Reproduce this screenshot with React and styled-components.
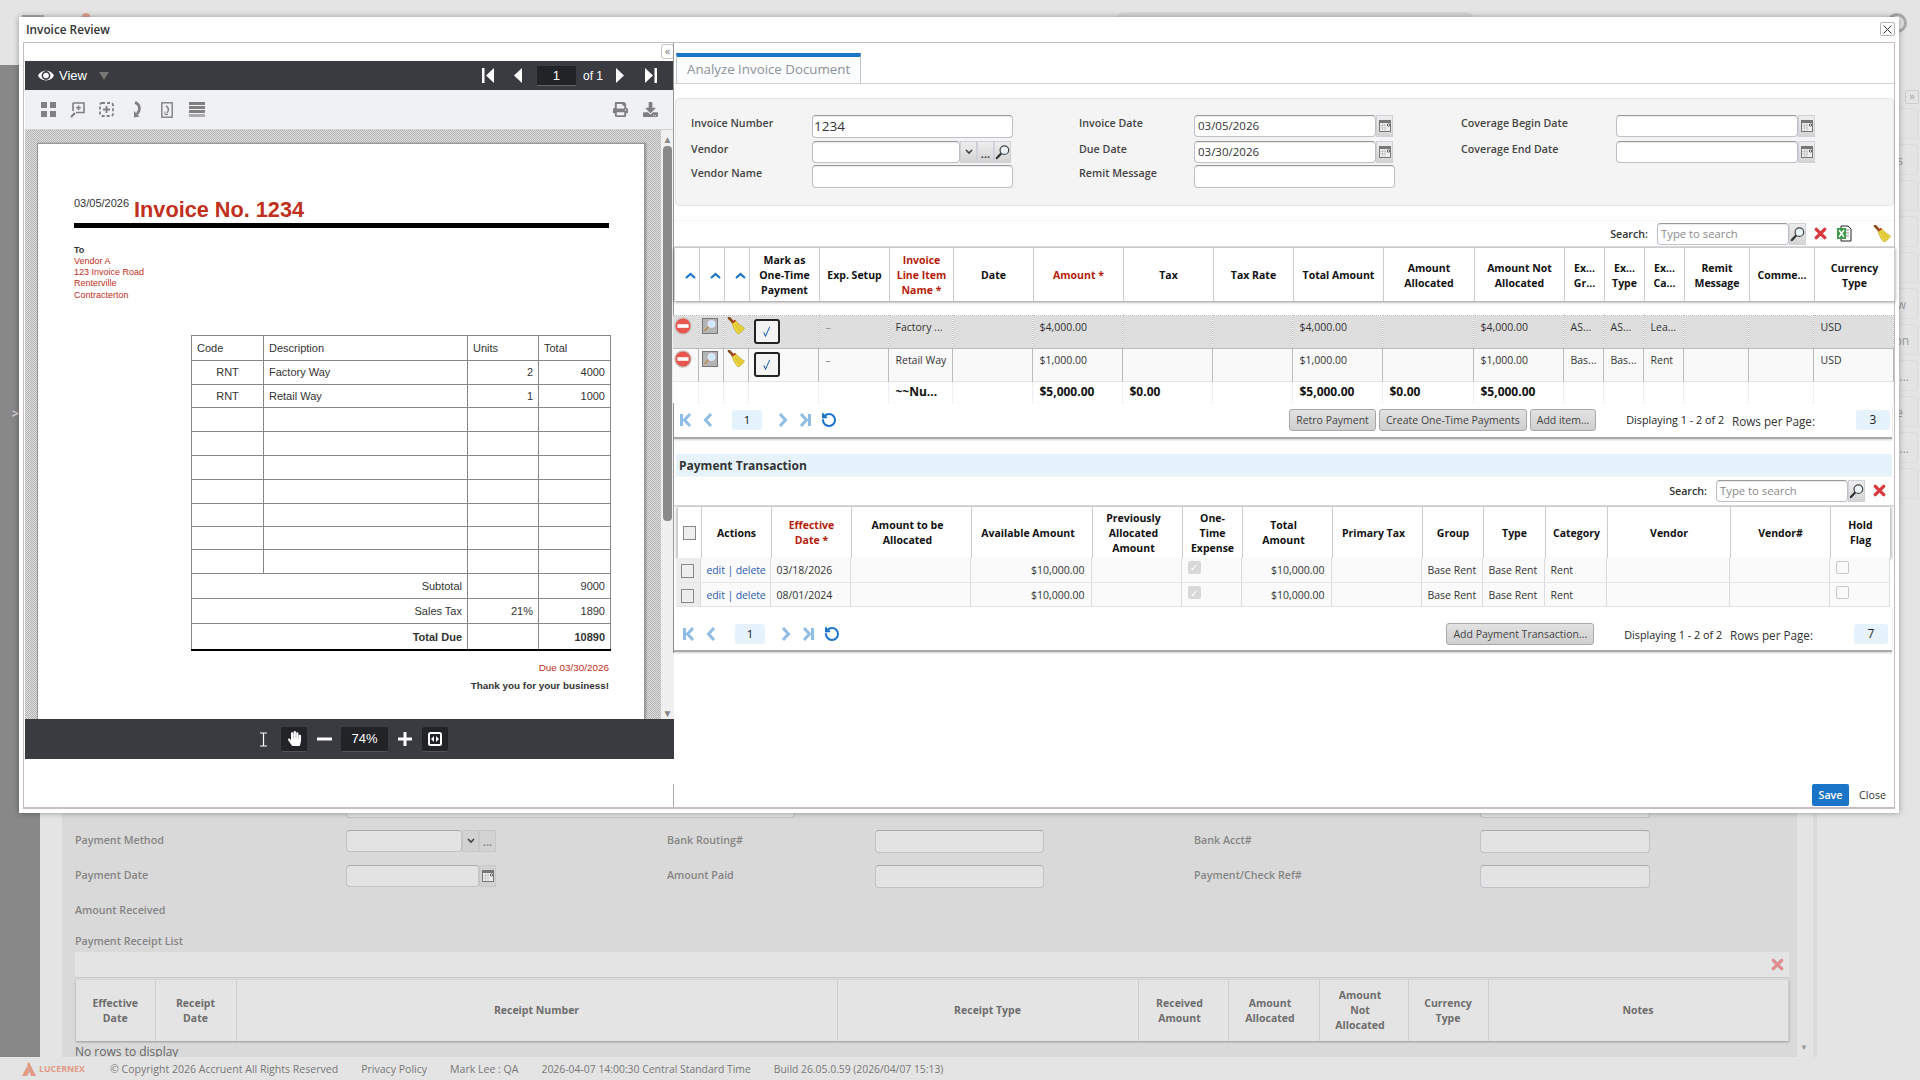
import React from "react";
import styled, { createGlobalStyle } from "styled-components";
import { RotateCcw } from "lucide-react";
import { FaHandPaper, FaPrint, FaDownload } from "react-icons/fa";

const Global = createGlobalStyle`
  html, body { margin: 0; padding: 0; width: 1920px; height: 1080px; overflow: hidden; background: #e4e4e4; }
  body { font-family: "Open Sans", "Liberation Sans", sans-serif; font-size: 10.5px; color: #333; }
  * { box-sizing: border-box; }
  table { border-collapse: collapse; table-layout: fixed; }
  svg { display: block; }
`;

/* ---------- page behind the dialog ---------- */
const Page = styled.div`
  position: relative;
  width: 1920px;
  height: 1080px;
  display: flex;
  flex-direction: column;
  overflow: hidden;
`;
const TopBar = styled.div`
  height: 65px;
  flex: none;
  background: #e4e4e4;
  display: flex;
  padding-top: 12px;
`;
const TopStub = styled.div`
  width: 22px; height: 8px; margin: 3px 0 0 22px; background: #aaa;
`;
const TopDot = styled.div`
  width: 8px; height: 8px; margin: 1px 0 0 38px; border-radius: 50%; background: #e0a090;
`;
const TopSearch = styled.div`
  width: 358px; height: 20px; margin-left: 1026px; border-radius: 8px; background: #d8d8d8;
`;
const TopRing = styled.div`
  width: 20px; height: 20px; margin: 1px 0 0 413px; border-radius: 50%; border: 3px solid #aaa;
`;
const Middle = styled.div`
  flex: 1;
  display: flex;
  min-height: 0;
`;
const LeftRail = styled.div`
  width: 40px;
  flex: none;
  background: #888;
  color: #d4d4d4;
  font-size: 12px;
  font-weight: 700;
  padding: 340px 0 0 12px;
`;
const LeftGutter = styled.div`
  width: 22px;
  flex: none;
  background: #e4e4e4;
`;
const Panel = styled.div`
  width: 1735px;
  flex: none;
  background: #d9d9d9;
  padding: 730px 8px 0 13px;
  overflow: hidden;
`;
const BgRow = styled.div`
  display: grid;
  grid-template-columns: 271px 321px 208px 319px 286px 170px;
  height: 35px;
  align-items: start;
`;
const BgLabel = styled.div`
  color: #858585;
  font-weight: 600;
  font-size: 10.7px;
  line-height: 16px;
  padding-top: 2px;
`;
const BgInput = styled.div`
  height: ${p => p.$h || 23}px;
  width: ${p => (p.$w ? p.$w + "px" : "auto")};
  border: 1px solid #c2c2ca;
  border-top-color: #aaa;
  border-radius: 4px;
  background: #e3e3e3;
  flex: none;
`;
const BgField = styled.div`
  display: flex;
  align-items: flex-start;
`;
const BgBtn = styled.div`
  width: 17px;
  height: 22px;
  flex: none;
  background: #d2d2d2;
  border: 1px solid #c8c8c8;
  color: #888;
  font-size: 11px;
  font-weight: 700;
  display: flex;
  align-items: center;
  justify-content: center;
`;
const BgSectionLabel = styled(BgLabel)`
  height: ${p => p.$h}px;
`;
const BgGridBar = styled.div`
  height: 26px;
  width: 1714px;
  background: #e4e4e4;
  display: flex;
  justify-content: flex-end;
  align-items: center;
  padding-right: 5px;
  border-bottom: 1px solid #ccc;
`;
const BgTable = styled.table`
  width: 1712px;
  margin: 2px 0 0 1px;
  background: #e4e4e4;
  box-shadow: 0 1px 2px rgba(0,0,0,.3);
  th {
    height: 61px;
    font-size: 10.5px;
    line-height: 15px;
    color: #6d6d6d;
    font-weight: 700;
    border-right: 1px solid #cfcfcf;
    text-align: center;
  }
`;
const BgPadTh = styled.th`
  padding-right: 8px;
`;
const BgEmpty = styled.div`
  font-size: 12px;
  line-height: 16px;
  color: #666;
  margin-top: 3px;
`;
const ScrollGutter = styled.div`
  width: 20px;
  flex: none;
  background: #e4e4e4;
  border-right: 4px solid #dcdcdc;
  display: flex;
  align-items: flex-end;
  padding: 0 0 5px 3px;
  color: #999;
  font-size: 8px;
`;
const RightRail = styled.div`
  flex: 1;
  background: #e4e4e4;
  padding: 25px 2px 0 8px;
`;
const RailToggle = styled.div`
  width: 14px;
  height: 14px;
  margin-left: auto;
  margin-right: -1px;
  border: 1px solid #ccc;
  border-radius: 2px;
  color: #a8a8a8;
  font-size: 11px;
  line-height: 10px;
  text-align: center;
`;
const RailCards = styled.div`
  margin: 4px 0 0 -20px;
  display: flex;
  flex-direction: column;
  gap: 5px;
`;
const RailCard = styled.div`
  height: 31px;
  border: 1px solid #dcdcdc;
  border-radius: 3px;
  color: #9a9a9a;
  font-size: 12px;
  line-height: 31px;
  text-align: right;
  padding-right: ${p => p.$tail}px;
  overflow: hidden;
`;
const FooterBar = styled.div`
  height: 23px;
  flex: none;
  background: #e4e4e4;
  color: #777;
  font-size: 10.55px;
  display: flex;
  align-items: center;
  padding-left: 22px;
`;
const FootLogo = styled.div`
  display: flex;
  align-items: center;
  gap: 3px;
  width: 88px;
  color: #e09a86;
  font-weight: 700;
  font-size: 8.8px;
`;
const FootItem = styled.span`
  margin-right: ${p => p.$gap}px;
  font-size: ${p => p.$fs || 10.55}px;
  white-space: nowrap;
`;

/* ---------- dialog ---------- */
const Dialog = styled.div`
  position: absolute;
  left: 19px;
  top: 17px;
  width: 1880px;
  height: 796px;
  background: #fff;
  box-shadow: 0 0 6px rgba(0,0,0,.35);
  padding: 0 4px 4px;
  display: flex;
  flex-direction: column;
`;
const DialogTitle = styled.div`
  height: 25px;
  flex: none;
  display: flex;
  align-items: center;
  justify-content: space-between;
  padding-left: 3px;
  padding-bottom: 1px;
  font-weight: 600;
  font-size: 11.8px;
  color: #333;
`;
const CloseX = styled.div`
  width: 15px;
  height: 14px;
  border: 1px solid #b5b5b5;
  border-radius: 2px;
  display: flex;
  align-items: center;
  justify-content: center;
`;
const Frame = styled.div`
  flex: 1;
  min-height: 0;
  display: flex;
  border: 1px solid #c6bcc2;
  border-bottom-width: 2px;
`;
const LeftPane = styled.div`
  width: 650px;
  flex: none;
  padding-left: 1px;
  display: flex;
  flex-direction: column;
`;
const CollapseStrip = styled.div`
  height: 18px;
  flex: none;
  display: flex;
  justify-content: flex-end;
  align-items: flex-start;
  padding-top: 1px;
`;
const CollapseBtn = styled.div`
  width: 13px;
  height: 15px;
  border: 1px solid #c4c4c4;
  border-radius: 3px;
  color: #777;
  font-size: 11px;
  line-height: 11px;
  text-align: center;
`;

/* ---------- pdf viewer ---------- */
const Viewer = styled.div`
  height: 698px;
  flex: none;
  display: flex;
  flex-direction: column;
`;
const DarkBar = styled.div`
  height: 29px;
  flex: none;
  background: #3a3b40;
  color: #fff;
  display: flex;
  align-items: center;
  padding: 0 17px 0 13px;
  font-family: "Liberation Sans", sans-serif;
`;
const ViewLabel = styled.span`
  font-size: 13px;
  margin: 0 12px 0 5px;
`;
const Grow = styled.div`
  flex: 1;
`;
const PageBox = styled.div`
  width: 39px;
  height: 20px;
  background: #222327;
  border-bottom: 1px solid #666;
  text-align: center;
  line-height: 20px;
  font-size: 13px;
  margin: 0 7px 0 15px;
`;
const OfLabel = styled.span`
  font-size: 12px;
  margin-right: 13px;
`;
const LightBar = styled.div`
  height: 40px;
  flex: none;
  background: #f0f1f5;
  display: flex;
  align-items: center;
  padding: 0 16px;
  color: #808080;
  border-bottom: 1px solid #d0d0d0;
`;
const ToolIcon = styled.div`
  width: ${p => p.$w || 16}px;
  margin-right: ${p => p.$mr || 0}px;
  flex: none;
`;
const Stage = styled.div`
  flex: 1;
  min-height: 0;
  display: flex;
  overflow: hidden;
  background: repeating-conic-gradient(#b4b4b4 0 25%, #dedede 0 50%) 0 0 / 2px 2px;
  padding: 13px 0 0 12px;
`;
const Sheet = styled.div`
  width: 608px;
  flex: none;
  background: #fff;
  border: 1px solid #999;
  border-bottom: none;
  box-shadow: 1px 0 2px rgba(0,0,0,.3);
  padding: 52px 35px 0 36px;
  font-family: "Liberation Sans", sans-serif;
  color: #333;
`;
const InvHead = styled.div`
  display: flex;
  align-items: flex-start;
  height: 27px;
  gap: 5px;
`;
const InvDate = styled.span`
  font-size: 11px;
  line-height: 14px;
`;
const InvTitle = styled.span`
  font-size: 21.7px;
  line-height: 26px;
  margin-top: 1px;
  font-weight: 700;
  color: #c0301c;
`;
const InvRule = styled.div`
  height: 5px;
  background: #000;
`;
const InvTo = styled.div`
  margin-top: 17px;
  font-size: 9px;
  font-weight: 700;
  line-height: 11px;
`;
const InvAddr = styled.div`
  color: #c0301c;
  font-size: 9px;
  line-height: 11.2px;
`;
const InvTable = styled.table`
  width: 419px;
  margin: 34px 0 0 117px;
  font-size: 11px;
  border-bottom: 2px solid #000;
  td {
    border: 1px solid #888;
    padding: 0 5px;
  }
`;
const InvRow = styled.tr``;
const InvCell = styled.td`
  text-align: ${p => p.$a || "left"};
  font-weight: ${p => (p.$b ? 700 : 400)};
  height: ${p => p.$h || 23}px;
`;
const InvDue = styled.div`
  text-align: right;
  color: #c0301c;
  font-size: 9.9px;
  margin-top: 11px;
`;
const InvThanks = styled.div`
  text-align: right;
  font-size: 9.9px;
  font-weight: 700;
  margin-top: 7px;
`;
const StageScroll = styled.div`
  width: 15px;
  margin-left: 3px;
  margin-top: -13px;
  flex: 1;
  display: flex;
  flex-direction: column;
  align-items: center;
  background: #f0f0f0;
  padding: 5px 0 2px;
  color: #888;
  font-size: 10px;
  line-height: 8px;
  justify-content: space-between;
`;
const ScrollThumb = styled.div`
  width: 9px;
  height: 375px;
  border-radius: 4px;
  background: #8a8a8a;
  margin-top: 3px;
`;
const DarkFoot = styled.div`
  height: 40px;
  flex: none;
  background: #3a3b40;
  color: #fff;
  display: flex;
  align-items: center;
  justify-content: center;
  padding-left: 8px;
  font-family: "Liberation Sans", sans-serif;
`;
const BlackKey = styled.div`
  width: ${p => p.$w || 26}px;
  height: 25px;
  background: #222327;
  border-bottom: 1px solid #555;
  border-radius: 2px;
  display: flex;
  align-items: center;
  justify-content: center;
  font-size: 13px;
`;
const FootGlyph = styled.div`
  margin-right: ${p => p.$mr || 0}px;
  display: flex;
`;

/* ---------- right pane ---------- */
const RightPane = styled.div`
  flex: 1;
  min-width: 0;
  display: flex;
  flex-direction: column;
`;
const Upper = styled.div`
  border-left: 1px solid #999;
  margin-left: -1px;
  padding-bottom: 1px;
`;
const TabBar = styled.div`
  height: 41px;
  display: flex;
  align-items: flex-end;
  padding-left: 2px;
  border-bottom: 1px solid #d2d2d2;
`;
const Tab = styled.div`
  width: 185px;
  height: 30px;
  background: #fbfcfd;
  border-top: 4px solid #1a75c9;
  border-right: 1px solid #c0c4c8;
  border-left: 1px solid #c0c4c8;
  color: #8b9299;
  font-size: 13.3px;
  line-height: 25px;
  padding-left: 10px;
  white-space: nowrap;
`;
const FormPanel = styled.div`
  margin: 14px 0 0 1px;
  height: 108px;
  background: #f4f4f4;
  border: 1px solid #e4e4e4;
  border-radius: 4px;
  padding: 16px 0 0 15px;
  display: grid;
  grid-template-columns: 121px 201px 66px 115px 201px 66px 155px 199px;
  grid-template-rows: 26px 24px 23px;
  align-items: start;
`;
const FormLabel = styled.div`
  font-weight: 600;
  font-size: 10.7px;
  line-height: 16px;
  color: #444;
  grid-column: ${p => p.$col};
`;
const FieldWrap = styled.div`
  display: flex;
  align-items: flex-start;
  grid-column: ${p => p.$col};
  padding-right: ${p => p.$pr || 0}px;
`;
const TextBox = styled.div`
  flex: ${p => (p.$fixed ? "none" : 1)};
  min-width: 0;
  width: ${p => (p.$w ? p.$w + "px" : "auto")};
  height: ${p => p.$h || 22}px;
  background: #fff;
  border: 1px solid #bfbfca;
  border-top-color: #999;
  border-radius: 4px;
  box-shadow: inset 0 1px 1px rgba(0,0,0,.08);
  padding-left: ${p => p.$pl || 3}px;
  font-size: ${p => p.$fs || 11.5}px;
  line-height: ${p => (p.$h || 22) - 2}px;
  color: ${p => p.$c || "#333"};
  white-space: nowrap;
  overflow: hidden;
`;
const GreyBtn = styled.div`
  width: 17px;
  height: 22px;
  flex: none;
  background: linear-gradient(#eee, #d4d4d4);
  border: 1px solid #d0d0d8;
  display: flex;
  align-items: center;
  justify-content: center;
  color: #555;
  font-weight: 700;
  font-size: 11px;
  line-height: 9px;
`;
const Dots = styled(GreyBtn)`
  align-items: flex-end;
  padding-bottom: 4px;
  color: #444;
`;
const SearchRow = styled.div`
  height: ${p => p.$h}px;
  margin-top: ${p => p.$mt || 0}px;
  display: flex;
  align-items: center;
  justify-content: flex-end;
  padding-right: ${p => p.$pr}px;
  border-top: 1px solid #f6f6f6;
  border-bottom: 2px solid #ddd;
`;
const SearchLabel = styled.span`
  font-size: 10.7px;
  font-weight: 600;
  color: #333;
  margin-right: 9px;
`;
const GridHeadTable = styled.table`
  width: ${p => p.$w}px;
  margin-left: ${p => p.$ml || 0}px;
  background: #fff;
  box-shadow: 0 1px 3px rgba(0,0,0,.45);
  th {
    height: ${p => p.$h}px;
    padding: 2px 2px 0;
    font-size: 10.5px;
    line-height: 15px;
    font-weight: 700;
    color: #111;
    text-align: center;
    border: 1px solid #ccc;
    border-top: none;
    border-bottom: none;
  }
`;
const PadTh = styled.th`
  &&& { padding-right: 10px; }
`;
const Required = styled.span`
  color: #b51d09;
`;
const HeadArrow = styled.div`
  display: flex;
  justify-content: center;
  padding-left: 7px;
`;
const GridBodyTable = styled.table`
  width: ${p => p.$w}px;
  margin: ${p => p.$mt || 0}px 0 0 ${p => p.$ml || 0}px;
  td {
    padding: ${p => p.$pad};
    line-height: 14px;
    font-size: 10.5px;
    color: #333;
    vertical-align: ${p => p.$va || "top"};
    white-space: nowrap;
    overflow: hidden;
  }
`;
const StripeRow = styled.tr`
  height: ${p => p.$h}px;
  background: ${p => p.$bg};
  td {
    border-top: 1px ${p => p.$line} #bcbcbc;
    border-right: 1px ${p => p.$line} #bcbcbc;
  }
`;
const PlainRow = styled.tr`
  height: ${p => p.$h}px;
  background: #fafafa;
  td {
    border-bottom: 1px solid #e6e6e6;
    border-right: 1px solid #dcdcdc;
  }
`;
const TotalRow = styled.tr`
  height: 21px;
  background: #fff;
  td {
    border-top: 1px solid #e6e6e6;
    border-right: 1px solid #eee;
    font-weight: 700;
    font-size: 12px;
    color: #111;
    padding-top: 3px;
  }
`;
const IconCell = styled.td`
  &&& { padding: ${p => p.$pt ?? 2}px 0 0 ${p => p.$pl ?? 1}px; }
`;
const MarkBox = styled.div`
  width: 26px;
  height: 25px;
  margin: 3px 0 0 5px;
  background: #f4f4f4;
  border: 2px solid #222;
  border-radius: 3px;
  display: flex;
  align-items: center;
  justify-content: center;
`;
const DashText = styled.span`
  color: #888;
`;
const Pager = styled.div`
  height: ${p => p.$h}px;
  display: flex;
  align-items: center;
  padding: ${p => p.$pt || 0}px ${p => p.$pr || 2}px 0 ${p => p.$pl}px;
  border-bottom: 2px solid #aaa;
  box-shadow: 0 1px 2px rgba(0,0,0,.2);
  margin-right: 2px;
`;
const PagerIcon = styled.div`
  width: ${p => p.$w || 16}px;
  margin-right: ${p => p.$mr || 0}px;
  flex: none;
  color: ${p => p.$c || "#8fbde6"};
`;
const XSlot = styled.div`
  width: 21px;
  margin-right: ${p => p.$mr || 0}px;
  flex: none;
  display: flex;
  justify-content: flex-end;
`;
const PageNum = styled.div`
  width: 30px;
  height: 20px;
  border-radius: 3px;
  background: #e6f3fc;
  color: #111;
  text-align: center;
  line-height: 20px;
  font-size: 11.5px;
  margin-right: 16px;
  flex: none;
`;
const GridBtn = styled.div`
  height: 22px;
  padding: 0 6px;
  margin-right: ${p => p.$mr ?? 3}px;
  background: linear-gradient(#e2e2e2, #cfcfcf);
  border: 1px solid #a8a8a8;
  border-radius: 3px;
  color: #444;
  font-size: 10.5px;
  line-height: 20px;
  white-space: nowrap;
  flex: none;
`;
const Spring = styled.div`
  flex: 1;
`;
const PagerInfo = styled.span`
  margin: 0 8px 0 ${p => p.$ml}px;
  font-size: 10.8px;
  color: #222;
  white-space: nowrap;
`;
const RowsPer = styled.span`
  font-size: 11.7px;
  color: #333;
  white-space: nowrap;
  padding-top: 2px;
  margin-right: ${p => p.$mr}px;
`;
const PerBox = styled.div`
  width: 34px;
  height: 20px;
  border-radius: 3px;
  background: #e6f3fc;
  color: #222;
  text-align: center;
  line-height: 20px;
  font-size: 12px;
  flex: none;
`;
const Band = styled.div`
  height: 22px;
  margin: 15px 2px 0 2px;
  background: #e6f3fc;
  font-weight: 700;
  font-size: 12px;
  line-height: 23px;
  color: #333;
  padding-left: 3px;
`;
const EditLink = styled.span`
  color: #2a5db0;
  letter-spacing: -.1px;
`;
const CheckBoxSq = styled.div`
  width: 13px;
  height: 14px;
  margin: 3px 0 0 5px;
  border: 1px solid #888;
  background: #eee;
`;
const HeadCheck = styled(CheckBoxSq)`
  margin: 0 auto;
`;
const DisabledCheck = styled.div`
  width: 13px;
  height: 13px;
  border-radius: 2px;
  background: #d8d8d8;
  display: flex;
  align-items: center;
  justify-content: center;
  color: #fff;
  font-size: 10px;
  line-height: 10px;
`;
const EmptyCheck = styled.div`
  width: 13px;
  height: 13px;
  border-radius: 2px;
  border: 1px solid #c8c8c8;
  background: #fafafa;
`;
const LeadCell = styled.td`
  &&& { padding: 0; background: #ececec; }
`;
const BoxCell = styled.td`
  &&& { padding: 3px 0 0 6px; vertical-align: top; }
`;
const RightCell = styled.td`
  text-align: right;
`;
const Filler = styled.div`
  flex: 1;
`;
const FootBar = styled.div`
  height: 23px;
  flex: none;
  border-left: 1px solid #aaa;
  margin-left: -1px;
  display: flex;
  justify-content: flex-end;
  align-items: flex-start;
  padding-right: 8px;
`;
const SaveBtn = styled.div`
  width: 37px;
  height: 22px;
  background: #1a75c9;
  border-radius: 2px;
  color: #fff;
  font-size: 10.7px;
  font-weight: 600;
  line-height: 22px;
  text-align: center;
`;
const CloseBtn = styled.div`
  margin-left: 10px;
  font-size: 10.7px;
  line-height: 22px;
  color: #333;
`;

/* ---------- drawn icons ---------- */
const Magnifier = ({ size = 16 }) => (
  <svg width={size} height={size} viewBox="0 0 16 16">
    <line x1="6.5" y1="9.5" x2="2" y2="14.5" stroke="#333" strokeWidth="2.4" strokeLinecap="round" />
    <circle cx="10" cy="6" r="4.6" fill="#eaf5fb" stroke="#444" strokeWidth="1.3" />
  </svg>
);
const RedX = ({ size = 13, o = 1 }) => (
  <svg width={size} height={size} viewBox="0 0 14 14" opacity={o}>
    <path d="M2.5 2.5 L11.5 11.5 M11.5 2.5 L2.5 11.5" stroke="#d93a3e" strokeWidth="3.6" strokeLinecap="round" />
  </svg>
);
const Excel = () => (
  <svg width="17" height="17" viewBox="0 0 17 17">
    <path d="M5 1h7l3 3v12H5z" fill="#fff" stroke="#222" strokeWidth="1" />
    <path d="M10 5h3M10 8h3M10 11h3" stroke="#888" />
    <rect x="1" y="3" width="9" height="11" fill="#3e9a4a" />
    <path d="M3 5l5 7M8 5l-5 7" stroke="#fff" strokeWidth="1.4" />
  </svg>
);
const Broom = () => (
  <svg width="18" height="18" viewBox="0 0 18 18">
    <path d="M2 1 L6.5 5.5" stroke="#8a4a1a" strokeWidth="2.6" strokeLinecap="round" />
    <path d="M5 6 L8.5 3.5 C11 6.5 14 9 17.5 11 C16 14 13.5 16 11 17 C8 14 6 10 5 6z" fill="#ecd63f" stroke="#b79a20" strokeWidth=".6" />
    <path d="M8 7 L13 15 M10 6.5 L15 13" stroke="#c9ad24" strokeWidth=".7" />
    <path d="M5 6 L8.5 3.5" stroke="#b5421f" strokeWidth="1.8" />
  </svg>
);
const Calendar = () => (
  <svg width="12" height="12" viewBox="0 0 12 12">
    <rect x=".5" y=".5" width="11" height="11" fill="#eee" stroke="#777" />
    <rect x=".5" y=".5" width="11" height="2.5" fill="#777" />
    <path d="M1 5.5h6M1 8h6M3.5 3v8M6 3v8" stroke="#bbb" strokeWidth=".7" />
    <circle cx="9.5" cy="5" r="1.2" fill="#fff" stroke="#333" strokeWidth=".8" />
  </svg>
);
const CalBtn = () => <GreyBtn><Calendar /></GreyBtn>;
const Stop = () => (
  <svg width="18" height="18" viewBox="0 0 16 16">
    <circle cx="8" cy="8" r="7.2" fill="#e8574f" stroke="#c9c0bb" strokeWidth="1" />
    <rect x="3" y="6.4" width="10" height="3.2" fill="#fff" />
  </svg>
);
const ViewGlass = () => (
  <svg width="16" height="16" viewBox="0 0 16 16">
    <rect x=".5" y=".5" width="15" height="15" fill="#b4b4b4" stroke="#777" />
    <line x1="7" y1="8" x2="2.5" y2="13" stroke="#c08a50" strokeWidth="1.6" />
    <circle cx="9.5" cy="6" r="3.6" fill="#cfeaff" stroke="#eef" strokeWidth=".8" />
  </svg>
);
const Check = ({ size = 13 }) => (
  <svg width={size} height={size} viewBox="0 0 14 14">
    <path d="M4 8 L6 12 L10.5 2" fill="none" stroke="#1d5fb0" strokeWidth="1.1" />
  </svg>
);
const ChevUp = () => (
  <svg width="11" height="7" viewBox="0 0 11 7">
    <path d="M1 6 L5.5 2 L10 6" fill="none" stroke="#1a75c9" strokeWidth="2.2" />
  </svg>
);
const PageFirst = () => (
  <svg width="13" height="14" viewBox="0 0 13 14">
    <rect x="1" y="1" width="3" height="12" fill="currentColor" />
    <path d="M11 1 L5.5 7 L11 13" fill="none" stroke="currentColor" strokeWidth="3" />
  </svg>
);
const PagePrev = () => (
  <svg width="10" height="14" viewBox="0 0 10 14">
    <path d="M8 1 L2.5 7 L8 13" fill="none" stroke="currentColor" strokeWidth="3" />
  </svg>
);
const PageNext = () => (
  <svg width="10" height="14" viewBox="0 0 10 14">
    <path d="M2 1 L7.5 7 L2 13" fill="none" stroke="currentColor" strokeWidth="3" />
  </svg>
);
const PageLast = () => (
  <svg width="13" height="14" viewBox="0 0 13 14">
    <rect x="9" y="1" width="3" height="12" fill="currentColor" />
    <path d="M2 1 L7.5 7 L2 13" fill="none" stroke="currentColor" strokeWidth="3" />
  </svg>
);
const EyeGlyph = () => (
  <svg width="16" height="15" viewBox="0 0 16 15">
    <path d="M0 7.5 C3 1 13 1 16 7.5 C13 14 3 14 0 7.5z" fill="#fff" />
    <circle cx="8" cy="7.5" r="4.4" fill="#3a3b40" />
    <circle cx="8" cy="7.5" r="2.8" fill="#fff" />
  </svg>
);
const TriFirst = () => (
  <svg width="13" height="15" viewBox="0 0 13 15">
    <rect x="0" y="0" width="2.5" height="15" fill="#fff" />
    <path d="M12 0v15L4 7.5z" fill="#fff" />
  </svg>
);
const TriPrev = () => (
  <svg width="8" height="15" viewBox="0 0 8 15"><path d="M8 0v15L0 7.5z" fill="#fff" /></svg>
);
const TriNext = () => (
  <svg width="8" height="15" viewBox="0 0 8 15"><path d="M0 0v15L8 7.5z" fill="#fff" /></svg>
);
const TriLast = () => (
  <svg width="13" height="15" viewBox="0 0 13 15">
    <rect x="10.5" y="0" width="2.5" height="15" fill="#fff" />
    <path d="M1 0v15L9 7.5z" fill="#fff" />
  </svg>
);
const IconGrid = () => (
  <svg width="15" height="15" viewBox="0 0 15 15" fill="#808080">
    <rect x="0" y="0" width="6" height="6" /><rect x="9" y="0" width="6" height="6" />
    <rect x="0" y="9" width="6" height="6" /><rect x="9" y="9" width="6" height="6" />
  </svg>
);
const IconZoomDoc = () => (
  <svg width="15" height="16" viewBox="0 0 15 16" fill="none" stroke="#808080" strokeWidth="1.6">
    <path d="M3 1h11v9.5H6" /><path d="M3 1v8" />
    <path d="M5 11 L1 15" strokeWidth="2.2" />
    <path d="M8.5 3.5v4.5M6.3 5.7h4.5" strokeWidth="1.6" />
  </svg>
);
const IconMarquee = () => (
  <svg width="15" height="15" viewBox="0 0 15 15" fill="none" stroke="#808080" strokeWidth="1.8">
    <rect x="1" y="1" width="13" height="13" rx="2" strokeDasharray="3 2" />
    <path d="M7.5 4v7M4 7.5h7" />
  </svg>
);
const IconRotate = () => (
  <svg width="9" height="17" viewBox="0 0 9 17" fill="none">
    <path d="M2 1.5 C7 3 8 9 4 13" stroke="#808080" strokeWidth="2.6" />
    <path d="M1 10 L6.5 15.5 L1 16.5z" fill="#808080" />
  </svg>
);
const IconDocRotate = () => (
  <svg width="12" height="16" viewBox="0 0 12 16" fill="none" stroke="#808080">
    <rect x=".8" y=".8" width="10.4" height="14.4" strokeWidth="1.4" />
    <path d="M5 4c3 1 3 5 1 7" strokeWidth="1.5" />
    <path d="M4 9.5v3h3" strokeWidth="1" />
  </svg>
);
const IconLines = () => (
  <svg width="16" height="15" viewBox="0 0 16 15" fill="#808080">
    <rect y="0" width="16" height="3" /><rect y="4" width="16" height="3" />
    <rect y="8" width="16" height="3" /><rect y="12" width="16" height="3" opacity=".6" />
  </svg>
);
const IBeam = () => (
  <svg width="9" height="15" viewBox="0 0 9 15" fill="none" stroke="#fff" strokeWidth="1.2">
    <path d="M1 1h7M1 14h7M4.5 1v13" />
  </svg>
);
const PlusMinus = ({ plus, w = 14 }) => (
  <svg width={w} height="14" viewBox={`0 0 ${w} 14`} stroke="#fff" strokeWidth="3">
    <path d={`M0 7h${w}`} />{plus && <path d={`M${w / 2} 0v14`} />}
  </svg>
);
const FitIcon = () => (
  <svg width="14" height="14" viewBox="0 0 14 14">
    <rect x="1" y="1" width="12" height="12" rx="1.5" fill="none" stroke="#fff" strokeWidth="2" />
    <path d="M6 4v6L3 7zM8 4v6l3-3z" fill="#fff" />
  </svg>
);
const LogoMark = () => (
  <svg width="14" height="14" viewBox="0 0 14 14" fill="#e09a86">
    <path d="M0 14 L5 4 L8 9 L5 14z" /><path d="M5 2 L7 0 L14 14 L9 14z" />
  </svg>
);
const CloseGlyph = () => (
  <svg width="9" height="9" viewBox="0 0 9 9" stroke="#333" strokeWidth="1"><path d="M.5 .5l8 8M8.5 .5l-8 8" /></svg>
);
const DownGlyph = () => (
  <svg width="8" height="6" viewBox="0 0 8 6" fill="none" stroke="#444" strokeWidth="1.6"><path d="M1 1l3 3 3-3" /></svg>
);

/* ---------- data ---------- */
const lineCols = [25, 25, 25, 70, 70, 64, 80, 90, 90, 80, 90, 91, 90, 40, 40, 40, 65, 65, 80];
const payCols = [24, 70, 80, 120, 121, 90, 60, 90, 90, 61, 62, 62, 123, 100, 60];
const receiptCols = [79, 81, 601, 301, 90, 91, 89, 80, 300];
const Cols = ({ w }) => <colgroup>{w.map((x, i) => <col key={i} width={x} />)}</colgroup>;

const lineRows = [
  { name: "Factory ...", amt: "$4,000.00", g: "AS...", t: "AS...", c: "Lea...", line: "dotted", bg: "#dedede" },
  { name: "Retail Way", amt: "$1,000.00", g: "Bas...", t: "Bas...", c: "Rent", line: "solid", bg: "#f9f9f9" },
];
const payRows = ["03/18/2026", "08/01/2024"];
const railTails = [[0, ""], [14, "s"], [0, ""], [0, ""], [0, ""], [11, "w"], [8, "on"], [8, "..."], [14, "e"], [8, "..."], [0, ""]];

const LineRow = ({ r }) => (
  <StripeRow $h={33} $bg={r.bg} $line={r.line}>
    <IconCell $pt={1}><Stop /></IconCell>
    <IconCell $pl={3}><ViewGlass /></IconCell>
    <IconCell $pt={1} $pl={3}><Broom /></IconCell>
    <IconCell $pt={0} $pl={0}><MarkBox><Check /></MarkBox></IconCell>
    <td><DashText>–</DashText></td>
    <td>{r.name}</td>
    <td />
    <td>{r.amt}</td>
    <td />
    <td />
    <td>{r.amt}</td>
    <td />
    <td>{r.amt}</td>
    <td>{r.g}</td>
    <td>{r.t}</td>
    <td>{r.c}</td>
    <td />
    <td />
    <td>USD</td>
  </StripeRow>
);

const PayRow = ({ date, h }) => (
  <PlainRow $h={h}>
    <LeadCell><CheckBoxSq /></LeadCell>
    <td><EditLink>edit | delete</EditLink></td>
    <td>{date}</td>
    <td />
    <RightCell>$10,000.00</RightCell>
    <td />
    <BoxCell><DisabledCheck>✓</DisabledCheck></BoxCell>
    <RightCell>$10,000.00</RightCell>
    <td />
    <td>Base Rent</td>
    <td>Base Rent</td>
    <td>Rent</td>
    <td />
    <td />
    <BoxCell><EmptyCheck /></BoxCell>
  </PlainRow>
);

const PagerLeft = () => (
  <>
    <PagerIcon $w={24}><PageFirst /></PagerIcon>
    <PagerIcon $w={29}><PagePrev /></PagerIcon>
    <PageNum>1</PageNum>
    <PagerIcon $w={21}><PageNext /></PagerIcon>
    <PagerIcon $w={22}><PageLast /></PagerIcon>
    <PagerIcon $c="#1a75c9"><RotateCcw size={16} strokeWidth={3} /></PagerIcon>
  </>
);

const InvoiceRows = [
  ["RNT", "Factory Way", "2", "4000", 24],
  ["RNT", "Retail Way", "1", "1000", 23],
  ["", "", "", "", 24], ["", "", "", "", 24], ["", "", "", "", 24], ["", "", "", "", 24],
  ["", "", "", "", 23], ["", "", "", "", 23], ["", "", "", "", 24],
];

export default function App() {
  return (
    <Page>
      <Global />
      <TopBar>
        <TopStub />
        <TopDot />
        <TopSearch />
        <TopRing />
      </TopBar>
      <Middle>
        <LeftRail>&gt;</LeftRail>
        <LeftGutter />
        <Panel>
          <BgRow>
            <div />
            <BgInput $w={449} />
            <div />
            <div />
            <div />
            <BgInput />
          </BgRow>
          <BgRow>
            <BgLabel>Payment Method</BgLabel>
            <BgField>
              <BgInput $w={116} $h={22} />
              <BgBtn><DownGlyph /></BgBtn>
              <BgBtn>...</BgBtn>
            </BgField>
            <BgLabel>Bank Routing#</BgLabel>
            <BgInput $w={169} />
            <BgLabel>Bank Acct#</BgLabel>
            <BgInput />
          </BgRow>
          <BgRow>
            <BgLabel>Payment Date</BgLabel>
            <BgField>
              <BgInput $w={133} $h={22} />
              <BgBtn><Calendar /></BgBtn>
            </BgField>
            <BgLabel>Amount Paid</BgLabel>
            <BgInput $w={169} />
            <BgLabel>Payment/Check Ref#</BgLabel>
            <BgInput />
          </BgRow>
          <BgSectionLabel $h={31}>Amount Received</BgSectionLabel>
          <BgSectionLabel $h={21}>Payment Receipt List</BgSectionLabel>
          <BgGridBar><RedX o={0.5} /></BgGridBar>
          <BgTable>
            <Cols w={receiptCols} />
            <thead>
              <tr>
                <th>Effective<br />Date</th>
                <th>Receipt<br />Date</th>
                <th>Receipt Number</th>
                <th>Receipt Type</th>
                <BgPadTh>Received<br />Amount</BgPadTh>
                <BgPadTh>Amount<br />Allocated</BgPadTh>
                <BgPadTh>Amount<br />Not<br />Allocated</BgPadTh>
                <th>Currency<br />Type</th>
                <th>Notes</th>
              </tr>
            </thead>
          </BgTable>
          <BgEmpty>No rows to display</BgEmpty>
        </Panel>
        <ScrollGutter>▼</ScrollGutter>
        <RightRail>
          <RailToggle>»</RailToggle>
          <RailCards>
            {railTails.map(([t, s], i) => <RailCard key={i} $tail={t}>{s}</RailCard>)}
          </RailCards>
        </RightRail>
      </Middle>
      <FooterBar>
        <FootLogo><LogoMark />LUCERNEX</FootLogo>
        <FootItem $gap={23}>© Copyright 2026 Accruent All Rights Reserved</FootItem>
        <FootItem $gap={23}>Privacy Policy</FootItem>
        <FootItem $gap={23}>Mark Lee : QA</FootItem>
        <FootItem $gap={23} $fs={10.4}>2026-04-07 14:00:30 Central Standard Time</FootItem>
        <FootItem $gap={0} $fs={10.35}>Build 26.05.0.59 (2026/04/07 15:13)</FootItem>
      </FooterBar>

      <Dialog>
        <DialogTitle>
          Invoice Review
          <CloseX><CloseGlyph /></CloseX>
        </DialogTitle>
        <Frame>
          <LeftPane>
            <CollapseStrip><CollapseBtn>«</CollapseBtn></CollapseStrip>
            <Viewer>
              <DarkBar>
                <EyeGlyph />
                <ViewLabel>View</ViewLabel>
                <svg width="10" height="8" viewBox="0 0 10 8"><path d="M0 0h10L5 8z" fill="#777" /></svg>
                <Grow />
                <ToolIcon $w={13} $mr={19}><TriFirst /></ToolIcon>
                <ToolIcon $w={8}><TriPrev /></ToolIcon>
                <PageBox>1</PageBox>
                <OfLabel>of 1</OfLabel>
                <ToolIcon $w={8} $mr={20}><TriNext /></ToolIcon>
                <ToolIcon $w={13}><TriLast /></ToolIcon>
              </DarkBar>
              <LightBar>
                <ToolIcon $w={15} $mr={14}><IconGrid /></ToolIcon>
                <ToolIcon $w={15} $mr={14}><IconZoomDoc /></ToolIcon>
                <ToolIcon $w={15} $mr={19}><IconMarquee /></ToolIcon>
                <ToolIcon $w={9} $mr={19}><IconRotate /></ToolIcon>
                <ToolIcon $w={12} $mr={16}><IconDocRotate /></ToolIcon>
                <ToolIcon $w={16}><IconLines /></ToolIcon>
                <Grow />
                <ToolIcon $w={15} $mr={15}><FaPrint size={15} /></ToolIcon>
                <ToolIcon $w={15}><FaDownload size={15} /></ToolIcon>
              </LightBar>
              <Stage>
                <Sheet>
                  <InvHead>
                    <InvDate>03/05/2026</InvDate>
                    <InvTitle>Invoice No. 1234</InvTitle>
                  </InvHead>
                  <InvRule />
                  <InvTo>To</InvTo>
                  <InvAddr>
                    Vendor A<br />123 Invoice Road<br />Renterville<br />Contracterton
                  </InvAddr>
                  <InvTable>
                    <colgroup>
                      <col width="72" /><col width="204" /><col width="71" /><col width="72" />
                    </colgroup>
                    <tbody>
                      <InvRow>
                        <InvCell $h={25}>Code</InvCell>
                        <InvCell>Description</InvCell>
                        <InvCell>Units</InvCell>
                        <InvCell>Total</InvCell>
                      </InvRow>
                      {InvoiceRows.map((r, i) => (
                        <InvRow key={i}>
                          <InvCell $a="center" $h={r[4]}>{r[0]}</InvCell>
                          <InvCell>{r[1]}</InvCell>
                          <InvCell $a="right">{r[2]}</InvCell>
                          <InvCell $a="right">{r[3]}</InvCell>
                        </InvRow>
                      ))}
                      <InvRow>
                        <InvCell colSpan={2} $a="right" $h={25}>Subtotal</InvCell>
                        <InvCell />
                        <InvCell $a="right">9000</InvCell>
                      </InvRow>
                      <InvRow>
                        <InvCell colSpan={2} $a="right" $h={25}>Sales Tax</InvCell>
                        <InvCell $a="right">21%</InvCell>
                        <InvCell $a="right">1890</InvCell>
                      </InvRow>
                      <InvRow>
                        <InvCell colSpan={2} $a="right" $b $h={27}>Total Due</InvCell>
                        <InvCell />
                        <InvCell $a="right" $b>10890</InvCell>
                      </InvRow>
                    </tbody>
                  </InvTable>
                  <InvDue>Due 03/30/2026</InvDue>
                  <InvThanks>Thank you for your business!</InvThanks>
                </Sheet>
                <Grow />
                <StageScroll>
                  <span>▲</span>
                  <ScrollThumb />
                  <Grow />
                  <span>▼</span>
                </StageScroll>
              </Stage>
              <DarkFoot>
                <FootGlyph $mr={13}><IBeam /></FootGlyph>
                <FootGlyph $mr={10}><BlackKey><FaHandPaper size={15} /></BlackKey></FootGlyph>
                <FootGlyph $mr={9}><PlusMinus w={15} /></FootGlyph>
                <FootGlyph $mr={10}><BlackKey $w={47}>74%</BlackKey></FootGlyph>
                <FootGlyph $mr={10}><PlusMinus plus /></FootGlyph>
                <FootGlyph><BlackKey><FitIcon /></BlackKey></FootGlyph>
              </DarkFoot>
            </Viewer>
          </LeftPane>

          <RightPane>
            <Upper>
              <TabBar><Tab>Analyze Invoice Document</Tab></TabBar>
              <FormPanel>
                <FormLabel $col={1}>Invoice Number</FormLabel>
                <FieldWrap $col={2}><TextBox $h={23} $fs={13.5} $pl={1}>1234</TextBox></FieldWrap>
                <FormLabel $col={4}>Invoice Date</FormLabel>
                <FieldWrap $col={5} $pr={2}><TextBox>03/05/2026</TextBox><CalBtn /></FieldWrap>
                <FormLabel $col={7}>Coverage Begin Date</FormLabel>
                <FieldWrap $col={8}><TextBox /><CalBtn /></FieldWrap>

                <FormLabel $col={1}>Vendor</FormLabel>
                <FieldWrap $col={2} $pr={2}>
                  <TextBox />
                  <GreyBtn><DownGlyph /></GreyBtn>
                  <Dots>...</Dots>
                  <GreyBtn><Magnifier /></GreyBtn>
                </FieldWrap>
                <FormLabel $col={4}>Due Date</FormLabel>
                <FieldWrap $col={5} $pr={2}><TextBox>03/30/2026</TextBox><CalBtn /></FieldWrap>
                <FormLabel $col={7}>Coverage End Date</FormLabel>
                <FieldWrap $col={8}><TextBox /><CalBtn /></FieldWrap>

                <FormLabel $col={1}>Vendor Name</FormLabel>
                <FieldWrap $col={2}><TextBox $h={23} /></FieldWrap>
                <FormLabel $col={4}>Remit Message</FormLabel>
                <FieldWrap $col={5}><TextBox $h={23} /></FieldWrap>
              </FormPanel>

              <SearchRow $h={28} $mt={14} $pr={4}>
                <SearchLabel>Search:</SearchLabel>
                <TextBox $fixed $w={132} $h={22} $fs={11.3} $c="#8a8a8a">Type to search</TextBox>
                <GreyBtn><Magnifier /></GreyBtn>
                <XSlot $mr={9}><RedX /></XSlot>
                <PagerIcon $w={17} $mr={20}><Excel /></PagerIcon>
                <PagerIcon $w={17}><Broom /></PagerIcon>
              </SearchRow>
              <GridHeadTable $w={1220} $h={53}>
                <Cols w={lineCols} />
                <thead>
                  <tr>
                    <th><HeadArrow><ChevUp /></HeadArrow></th>
                    <th><HeadArrow><ChevUp /></HeadArrow></th>
                    <th><HeadArrow><ChevUp /></HeadArrow></th>
                    <th>Mark as<br />One-Time<br />Payment</th>
                    <th>Exp. Setup</th>
                    <th><Required>Invoice<br />Line Item<br />Name *</Required></th>
                    <th>Date</th>
                    <th><Required>Amount *</Required></th>
                    <th>Tax</th>
                    <th>Tax Rate</th>
                    <th>Total Amount</th>
                    <th>Amount<br />Allocated</th>
                    <th>Amount Not<br />Allocated</th>
                    <th>Ex...<br />Gr...</th>
                    <th>Ex...<br />Type</th>
                    <th>Ex...<br />Ca...</th>
                    <th>Remit<br />Message</th>
                    <th>Comme...</th>
                    <th>Currency<br />Type</th>
                  </tr>
                </thead>
              </GridHeadTable>
              <GridBodyTable $w={1220} $mt={14} $ml={-1} $pad="4px 7px 0">
                <Cols w={lineCols} />
                <tbody>
                  {lineRows.map(r => <LineRow key={r.name} r={r} />)}
                  <TotalRow>
                    <td /><td /><td /><td /><td />
                    <td>~~Nu...</td>
                    <td />
                    <td>$5,000.00</td>
                    <td>$0.00</td>
                    <td />
                    <td>$5,000.00</td>
                    <td>$0.00</td>
                    <td>$5,000.00</td>
                    <td /><td /><td /><td /><td /><td />
                  </TotalRow>
                </tbody>
              </GridBodyTable>
              <Pager $h={36} $pl={5}>
                <PagerLeft />
                <Spring />
                <GridBtn>Retro Payment</GridBtn>
                <GridBtn>Create One-Time Payments</GridBtn>
                <GridBtn>Add item...</GridBtn>
                <PagerInfo $ml={27}>Displaying 1 - 2 of 2</PagerInfo>
                <RowsPer $mr={41}>Rows per Page:</RowsPer>
                <PerBox>3</PerBox>
              </Pager>
              <Band>Payment Transaction</Band>
              <SearchRow $h={31} $pr={8}>
                <SearchLabel>Search:</SearchLabel>
                <TextBox $fixed $w={132} $h={22} $fs={11.3} $c="#8a8a8a">Type to search</TextBox>
                <GreyBtn><Magnifier /></GreyBtn>
                <XSlot><RedX /></XSlot>
              </SearchRow>
              <GridHeadTable $w={1213} $ml={3} $h={51}>
                <Cols w={payCols} />
                <thead>
                  <tr>
                    <th><HeadCheck /></th>
                    <th>Actions</th>
                    <th><Required>Effective<br />Date *</Required></th>
                    <PadTh>Amount to be<br />Allocated</PadTh>
                    <PadTh>Available Amount</PadTh>
                    <PadTh>Previously<br />Allocated<br />Amount</PadTh>
                    <th>One-<br />Time<br />Expense</th>
                    <PadTh>Total<br />Amount</PadTh>
                    <PadTh>Primary Tax</PadTh>
                    <th>Group</th>
                    <th>Type</th>
                    <th>Category</th>
                    <th>Vendor</th>
                    <th>Vendor#</th>
                    <th>Hold<br />Flag</th>
                  </tr>
                </thead>
              </GridHeadTable>
              <GridBodyTable $w={1213} $ml={2} $pad="0 6px" $va="middle">
                <Cols w={payCols} />
                <tbody>
                  {payRows.map((d, i) => <PayRow key={d} date={d} h={i ? 24 : 25} />)}
                </tbody>
              </GridBodyTable>
              <Pager $h={45} $pl={8} $pt={11} $pr={4}>
                <PagerLeft />
                <Spring />
                <GridBtn $mr={0}>Add Payment Transaction...</GridBtn>
                <PagerInfo $ml={30}>Displaying 1 - 2 of 2</PagerInfo>
                <RowsPer $mr={41}>Rows per Page:</RowsPer>
                <PerBox>7</PerBox>
              </Pager>
            </Upper>
            <Filler />
            <FootBar>
              <SaveBtn>Save</SaveBtn>
              <CloseBtn>Close</CloseBtn>
            </FootBar>
          </RightPane>
        </Frame>
      </Dialog>
    </Page>
  );
}
